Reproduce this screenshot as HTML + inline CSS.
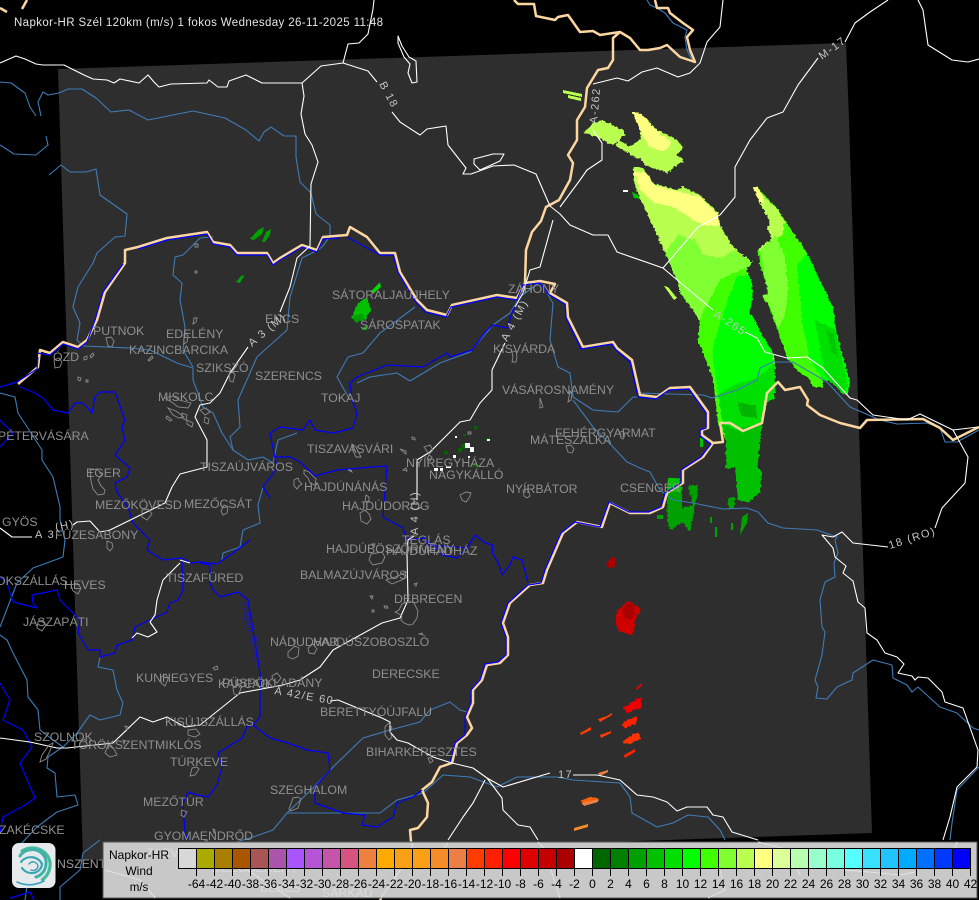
<!DOCTYPE html>
<html><head><meta charset="utf-8"><title>Napkor-HR</title>
<style>
html,body{margin:0;padding:0;background:#000;width:979px;height:900px;overflow:hidden}
svg{display:block;font-family:"Liberation Sans",sans-serif}
.l{fill:#8f8f8f;font-size:12.3px}
.r{fill:#c4c4c4;font-size:11px;letter-spacing:1.4px}
.w{fill:none;stroke:#fff;stroke-width:1.1;stroke-linejoin:round}
.s{fill:none;stroke:#3f7cb8;stroke-width:1.1;stroke-linejoin:round}
.b{fill:none;stroke:#0000ff;stroke-width:1.2;stroke-linejoin:round}
.t{fill:none;stroke:#fcd6a0;stroke-width:2.5;stroke-linejoin:round}
.v{fill:none;stroke:#8c8c8c;stroke-width:.9}
.e polygon,.e rect{shape-rendering:crispEdges}
.k{font-size:12px;fill:#000;text-anchor:middle}
</style></head><body>
<svg width="979" height="900" viewBox="0 0 979 900" xmlns="http://www.w3.org/2000/svg">
<defs><filter id="rough" filterUnits="userSpaceOnUse" x="0" y="0" width="979" height="900"><feTurbulence type="fractalNoise" baseFrequency=".33" numOctaves="2" seed="3" result="n"/><feDisplacementMap in="SourceGraphic" in2="n" scale="4" xChannelSelector="R" yChannelSelector="G"/></filter></defs>
<rect width="979" height="900" fill="#000"/>
<polygon points="58,69 846,43 849,120 872,833 83,860" fill="#2e2e2e"/>

<g class="e" filter="url(#rough)">
<!-- left plume -->
<polygon fill="#b8ff50" points="633,168 643,168 653,183 677,190 683,187 700,195 718,213 720,225 733,247 752,262 747,270 753,293 750,313 773,353 775,363 775,398 767,402 760,423 758,467 762,473 760,493 748,502 738,500 735,467 726,468 726,440 718,423 713,380 708,365 698,340 700,320 680,293 678,283 665,253 657,235 647,213 642,203 635,187"/>
<polygon fill="#ffff80" points="634,172 645,172 655,185 680,192 700,197 718,215 720,225 706,226 690,218 672,206 655,203 640,190"/>
<polygon fill="#80ff30" points="665,253 678,235 695,240 703,255 720,258 735,250 752,262 747,270 753,293 750,313 773,353 775,398 767,402 760,423 726,440 718,423 713,380 708,365 698,340 700,320 680,293 678,283"/>
<polygon fill="#40ff00" points="700,318 720,280 745,268 753,293 750,313 773,353 775,398 767,402 760,423 726,440 718,423 713,380 708,365 698,340"/>
<polygon fill="#00ff00" points="712,350 723,313 737,277 750,275 753,293 750,313 773,353 775,398 767,402 762,423 726,430 718,395"/>
<polygon fill="#00e000" points="718,395 733,385 757,378 775,363 775,398 767,402 760,423 758,467 735,467 726,468 726,440"/>
<polygon fill="#00c000" points="721,423 735,430 762,423 758,467 762,473 760,493 748,502 738,500 735,467 726,468 726,440"/>
<polygon fill="#00b400" points="737,402 756,405 757,418 742,416"/>
<!-- right plume -->
<polygon fill="#40ff00" points="753,187 757,186 764,195 777,208 790,228 807,253 820,280 833,307 837,333 850,383 848,395 842,393 832,382 823,380 822,387 813,387 810,380 797,370 787,358 777,327 768,305 762,296 768,293 765,280 760,265 758,250 765,243 772,240 768,228 770,222 762,205 756,195"/>
<polygon fill="#b8ff50" points="756,195 764,197 777,208 785,222 782,235 770,245 760,250 758,250 765,243 772,240 768,228 770,222"/>
<polygon fill="#ffff80" points="753,187 757,186 764,197 762,205 756,195"/>
<polygon fill="#80ff30" points="760,250 775,235 785,255 788,290 784,318 778,328 769,304 762,296 768,293"/>
<polygon fill="#00ff00" points="797,265 807,253 820,280 833,307 837,333 850,383 848,395 842,393 832,382 823,380 810,360 802,320"/>
<polygon fill="#00e000" points="815,320 836,330 848,385 842,393 825,375"/>
<polygon fill="#00c800" points="826,330 833,333 838,358 832,352"/>
<!-- top echoes -->
<polygon fill="#b8ff50" points="583,133 593,123 603,120 623,130 625,135 613,145 597,137"/>
<polygon fill="#b8ff50" points="618,140 640,152 645,160 637,158 616,146"/>
<polygon fill="#b8ff50" points="632,112 643,115 657,130 677,140 683,148 677,155 684,160 667,173 645,165 640,158 628,148 640,140 640,128"/>
<polygon fill="#ffff80" points="632,112 643,115 658,132 672,142 664,152 648,146 642,134"/>
<!-- Csenger area -->
<polygon fill="#00c000" points="668,478 680,478 682,492 682,500 667,497"/>
<polygon fill="#00a000" points="667,492 682,492 682,508 693,505 688,485 698,485 698,492 690,532 683,522 670,530 667,517"/>
<polygon fill="#00a000" points="728,497 735,497 734,509 728,509"/>
<polygon fill="#00c000" points="352,317 358,303 366,298 372,310 365,320 355,322"/>
<polygon fill="#00a000" points="352,317 362,313 366,320 355,322"/>
<!-- red -->
<polygon fill="#d00000" points="615,623 618,610 628,601 633,603 641,610 635,620 635,630 630,635 618,630"/>
<polygon fill="#aa0000" points="623,608 629,602 634,604 635,615 630,620 623,617"/>
<polygon fill="#ee0000" points="623,708 635,700 642,697 641,708 627,713"/>
<polygon fill="#ff2000" points="621,725 630,718 637,717 637,723 625,728"/>
<polygon fill="#ff3000" points="622,742 632,735 639,733 640,739 630,744"/>
</g>
<g class="e">
<polygon fill="#b8ff50" points="563,90 582,94 582,97 563,93"/>
<polygon fill="#b8ff50" points="568,95 581,98 581,101 568,98"/>
<polygon fill="#b8ff50" points="664,286 668,287 677,298 674,300"/>
<rect x="623" y="190" width="5" height="2" fill="#fff"/>
<polygon fill="#00c000" points="632,192 638,195 640,199 634,198"/>
<polygon fill="#00a000" points="742,517 748,513 747,523 740,535"/>
<rect x="657" y="515" width="6" height="4" fill="#00a000"/>
<rect x="710" y="517" width="2" height="6" fill="#00a000"/><rect x="715" y="527" width="2" height="10" fill="#00a000"/><rect x="731" y="523" width="2" height="7" fill="#00a000"/>
<rect x="700" y="438" width="3" height="9" fill="#00c000"/>
<polygon fill="#00a000" points="250,239 258,230 264,227 262,234 254,240"/>
<polygon fill="#00a000" points="262,242 266,232 271,229 270,235 265,242"/>
<polygon fill="#00a000" points="236,282 242,275 244,276 240,283"/>
<polygon fill="#00d800" points="370,292 380,282 381,287 374,293"/>
<polygon fill="#00a000" points="363,327 368,325 367,330 362,330"/>
<rect x="474" y="426" width="3" height="3" fill="#006600"/><rect x="463" y="434" width="3" height="2" fill="#006600"/><rect x="486" y="438" width="4" height="3" fill="#006600"/>
<rect x="487" y="439" width="3" height="2" fill="#fff"/><rect x="461" y="444" width="5" height="5" fill="#006600"/><rect x="465" y="443" width="5" height="5" fill="#fff"/><rect x="470" y="447" width="4" height="5" fill="#fff"/><rect x="458" y="448" width="4" height="4" fill="#006600"/><rect x="444" y="451" width="4" height="3" fill="#006600"/><rect x="453" y="455" width="3" height="3" fill="#fff"/><rect x="473" y="463" width="4" height="4" fill="#006600"/><rect x="446" y="466" width="5" height="2" fill="#fff"/><rect x="440" y="468" width="3" height="3" fill="#fff"/><rect x="434" y="468" width="4" height="3" fill="#fff"/><rect x="455" y="436" width="2" height="2" fill="#fff"/><rect x="468" y="456" width="2" height="2" fill="#fff"/>
<polygon fill="#aa0000" points="606,563 612,557 615,558 615,567 608,568"/>
<polygon fill="#e00000" points="636,688 642,683 642,685 637,690"/>
<polygon fill="#ff3c00" points="598,719 607,716 612,713 612,715 600,722"/>
<polygon fill="#ff3c00" points="580,733 591,727 591,730 581,735"/>
<polygon fill="#ff3c00" points="600,735 611,731 611,733 601,738"/>
<polygon fill="#ff2000" points="624,755 635,749 635,752 625,758"/>
<polygon fill="#ec7f45" points="598,773 608,770 608,772 600,776"/>
<polygon fill="#ff6000" points="580,801 590,797 598,798 597,801 586,804"/>
<polygon fill="#ec7f45" points="581,803 599,799 598,802 584,806"/>
<polygon fill="#f58c2a" points="574,828 588,824 588,827 574,831"/>
</g>

<!-- rivers -->
<g class="s">
<polyline points="0,82 11,83 25,93 30,107 36,116"/>
<polyline points="41,116 38,102 43,92 48,95 59,93 68,89 82,89 96,98 111,112 129,110 148,120 168,116 193,111 225,118 246,130 259,141 264,132 271,127 284,136 296,136 296,157 300,182 311,193 316,214 330,225 330,236 323,246 318,250 302,258 290,297 287,330 257,357 238,400 240,427 230,437 233,450 248,460 263,457 273,463 278,440 297,433"/>
<polyline points="0,145 14,154 36,155 48,145 46,136"/>
<polyline points="49,175 61,165 70,172 86,172 96,169 100,195 127,214 125,236 115,237 97,253 93,263 78,287 73,307 80,323 77,340 83,346 130,348 150,350 177,363 193,368 193,380 203,407 213,413 222,433 233,450"/>
<polyline points="213,237 200,238 183,255 175,257 173,275 182,283 180,300 185,327 183,350 193,367"/>
<polyline points="0,393 15,397 18,413 42,450 42,460 53,477 60,507 60,520 65,540 63,557 33,568 17,583 0,627"/>
<polyline points="0,635 7,640 13,653 27,680 28,697 38,710 40,730 53,740 63,747"/>
<polyline points="100,657 98,667 113,670 117,690 123,703 120,715 100,720 90,715 77,733 63,747 48,757 47,768 55,773 57,797 75,795 78,805 57,812 37,827 20,845 30,865 25,900"/>
<polyline points="100,840 83,853 80,870 60,887 60,900"/>
<polyline points="263,487 258,505 260,523 243,530 240,547 223,553 222,560"/>
<polyline points="415,307 380,333 363,353 348,357 337,377 350,400"/>
<polyline points="357,383 370,377 397,373 410,381 440,363 470,352 493,325 510,313 520,297 540,282 553,303 550,340 558,367 570,373 573,397 593,410 618,412 633,397 640,397"/>
<polyline points="573,400 593,427 613,447 627,462 640,468 650,472 660,490 673,500 693,503 723,509 747,508 758,512 768,523 783,528 817,530 837,537 835,540 838,553 834,563 835,577 825,582 820,600 822,627 825,632 822,655 815,680 818,687 816,698 827,699 837,687 852,680 853,673 873,660 892,665 893,678 907,685 912,692 918,687 940,707 957,713 973,728 979,730"/>
<polyline points="640,393 703,395 712,398 737,390 757,380 760,368 773,362 793,362 827,382 850,407 880,420 897,424 927,423 940,428 945,442 957,442 979,430"/>
<polyline points="979,767 957,790 952,823 950,840"/>
<polyline points="233,843 253,837 273,830 287,813 343,813 380,813 397,800 423,793 443,775 470,777 497,787 517,777 557,777 573,780 620,783 630,797 632,813 657,827 673,823 688,815 708,817 720,830 725,840"/>
<polyline points="467,712 460,710 450,702 430,710 420,722 390,730 363,738 333,767 313,788 287,813"/>
<polyline points="647,0 650,5 657,8 665,13 673,23 687,30 685,37 687,50 693,62"/>
</g>

<!-- tan border -->
<g class="t">
<polyline points="18,384 38,367 40,350 50,353 63,342 78,347 87,340 97,320 105,292 125,263 125,250 138,247 167,238 207,232 213,242 230,245 237,253 267,253 273,263 280,258 302,245 317,250 323,237 347,235 350,227 367,237 380,253 395,253 400,272 417,300 427,310 447,315 452,305 497,295 517,298 525,283 526,250 532,232 541,221 546,207 559,200 570,180 573,163 568,155 577,140 577,120 585,107 587,88 598,70 608,68 613,60 613,38 620,32"/>
<polyline points="514,0 518,4 534,4 536,16 555,20 558,17 568,15 580,32 593,31 600,35 613,33 620,32 630,38 640,50 648,50 660,48 667,45 680,57 695,62 690,50 687,37 693,30 683,23 670,13 668,8 657,8 655,0"/>
<polyline points="525,283 540,281 555,284 550,293 567,303 568,317 583,347 613,342 617,348 632,360 640,395 657,397 670,388 690,387 708,412 708,428 702,430 702,435 713,443 723,442 720,423 730,423 743,431 762,423 767,393 778,382 785,390 800,387 808,400 807,405 820,415 840,423 860,428 867,420 923,419 940,428 953,440 979,427"/>
<polyline points="713,443 703,457 683,470 683,483 667,493 663,507 650,513 630,513 610,503 602,527 577,522 563,533 547,570 543,583 530,585 510,603 503,623 508,637 508,655 500,663 487,665 482,680 473,690 473,703 467,717 472,728 467,735 457,743 452,763 440,767 432,782 422,790 428,803 427,817 418,828 410,830 412,853 383,895 380,900"/>
<polyline points="0,8 7,12"/><polyline points="27,0 22,9"/>
</g>

<!-- county blue -->
<g class="b">
<polyline points="0,387 17,382 37,369 38,357"/>
<polyline points="37,353 50,355 63,344 78,349 87,342 95,320 103,292 123,264"/>
<polyline points="138,249 167,240 207,234 213,244 230,247 237,255 267,255 273,265 280,260 302,247 317,252 323,239 340,238"/>
<polyline points="347,237 380,255 393,255 398,272 415,301 425,312 446,317 451,307 497,297 517,300 523,285 540,283 548,294 565,304 566,318 581,349 612,344 616,350 630,362 638,397 656,399 669,390 689,389 706,413 706,428 700,430 700,436 711,444"/>
<polyline points="711,444 701,457 681,470 681,483 665,493 661,507 649,512 629,512 609,502 600,527 575,522 561,533 545,570 541,583 528,585 508,603 501,623 506,637 506,655 498,662 485,664 480,680 471,690 471,703 465,717 465,735 455,743 450,763"/>
<polyline points="20,387 35,393 43,398 53,410 68,413 75,403 83,403 92,413 95,397 100,392 115,392 125,420 122,427 125,440 115,455 130,468 127,477 115,483 117,492 128,507 133,523 150,540 147,550 163,560 182,558 190,563 200,562 217,564 233,553 250,540"/>
<polyline points="270,498 263,487 277,468 270,433 280,427 303,430 310,420 315,430 333,433 353,428 357,413 352,400 350,383 357,377 387,365 423,367 447,353 450,357 472,350 487,330 493,325 507,328 513,310 520,298"/>
<polyline points="275,457 290,457 300,462 315,476 337,470 372,467 387,466 383,517 403,528 407,540 425,538 428,545 467,548 457,558 443,555 427,540"/>
<polyline points="467,548 475,535 485,543 493,545 492,553 498,562 502,575 510,565 513,557 522,560 528,583"/>
<polyline points="200,563 210,565 210,583 213,590 220,597 238,592 248,600 260,673 260,717 253,725 247,727 242,738 218,753 222,767 217,785 208,797 197,795 188,792 183,803 185,833 188,840"/>
<polyline points="253,725 270,738 285,742 307,750 328,753 330,770 315,787 315,803 343,813 365,815 362,825 377,827 393,817 397,803 413,797 422,790"/>
<polyline points="182,560 183,590 178,600 170,603 167,612 135,627 132,640 117,645 115,653 100,657 100,650 88,650 78,633 80,620 60,600 57,590 32,595 33,603 37,608 13,602 7,583 0,577"/>
<polyline points="0,683 10,700 3,720 23,730 32,747 20,763 35,798 25,805 3,817 0,833"/>
<polyline points="0,420 13,433 0,447"/>
<polyline points="10,898 30,892 34,900"/>
</g>

<!-- roads -->
<g class="w">
<polyline points="0,63 16,56 25,59 36,64 43,65 64,65 84,75 93,79 107,80 114,83 120,79 139,83 148,75 154,82 159,87 171,84 207,83 209,80 218,87 227,87 229,81 246,75 262,83 302,83 321,66 343,63 368,71 377,82"/>
<polyline points="392,112 400,122 420,135 427,129 446,126 448,145 466,168 463,174 471,174 493,166 514,165 536,174 550,206 560,214 570,225 593,235 608,235 617,252 663,268 713,310"/>
<polyline points="745,332 757,338 765,352 787,358 807,357 823,368 850,398 857,400 873,415 907,420 920,414 953,430 978,427"/>
<polyline points="953,430 968,457 965,483 942,508 935,528"/>
<polyline points="888,547 853,543 842,532 833,537 822,535 833,548 835,557 846,566 843,573 853,581 858,602 865,608 867,633 877,640 885,653 897,657 904,664 898,673 912,676 915,680 918,677 928,678 942,692 945,702 963,708 978,750 977,767 957,787 950,817 943,840"/>
<polyline points="302,83 304,96 301,114 305,134 312,145 318,162 311,184 310,246 297,258 290,287 280,312"/>
<polyline points="248,347 230,373 220,393 210,403 200,405 195,417 207,440 207,467 180,474 172,487 165,503 110,530 100,532 90,521 77,522 73,525"/>
<polyline points="0,528 12,537 32,537"/>
<polyline points="343,63 348,44 359,43 368,34 373,9 374,0"/>
<polygon points="398,36 402,46 409,57 416,61 417,82 412,83 408,73 410,64 404,57 398,43"/>
<polygon points="474,159 493,154 504,154 500,161 480,170 474,164"/>
<polyline points="553,220 540,267 530,270 523,293 515,307"/>
<polyline points="505,343 492,370 492,390 480,403 470,420 460,422 430,452 417,460 417,500"/>
<polyline points="414,536 408,540 407,553 408,600 400,618 382,623 333,650 320,667 300,680 283,685 240,693 200,725 185,727 167,717 153,722 140,717 113,743 67,748 57,748 30,742 0,738"/>
<polyline points="723,0 720,27 707,42 700,63 690,73 678,77 657,68 642,72 628,81 617,78 593,84"/>
<polyline points="593,130 602,143 602,160 587,170 580,180 560,207"/>
<polyline points="720,215 698,227 663,268"/>
<polyline points="767,118 783,112 798,85 818,58"/>
<polyline points="767,118 750,140 735,167 735,197 720,215"/>
<polyline points="845,42 855,23 870,12 888,0"/>
<polyline points="918,0 923,10 928,45 952,60 968,62 979,59"/>
<polyline points="330,701 338,700 382,718 390,722 390,732 397,740 408,743 433,757 452,763 473,768 487,778 503,787 550,773"/>
<polyline points="573,775 597,775 620,780 637,795 653,797 667,802 677,811 687,807 707,807 713,815 723,817 732,832 758,840"/>
<polyline points="487,778 502,798 503,810 518,825 530,827 538,840"/>
<polyline points="485,780 473,803 463,817 448,840"/>
<polyline points="180,560 190,563"/>
<polyline points="180,563 163,580 157,600 155,615 150,622 157,632 148,637 137,633 132,638"/>
</g>

<!-- town outlines -->
<path class="v" d="M165 398l8-2 6 4 12 3-3 5-10-1-5-4zM168 408l8 3 8 6-5 1-6-3zM182 413l5 2-1 5-4-2zM187 420l6 3-1 4-5-3zM205 417l4 2-1 5-4-2zM167 416l5 4-2 1-4-3zM200 410l6-2 4 4-5 3zM90 470l7-1 5 5-4 6 3 6 4 4-1 4-6 1-5-6-2-8zM142 510l6-1 4 5-5 6-5-3zM224 505l4 2-1 6-4 2-2-4zM106 338l5-1 3 4-2 6-4-1zM54 360l5-2 3 4-2 5-5 1zM90 356l3-3 1 2-3 3zM148 360l4-4 1 2-4 3zM78 377l3 1-1 3-2-1zM195 244l3 0 0 3-3 0zM195 271l2 0 0 2-2 0zM194 318l3 0-1 4-3 2zM184 335l2-2 2 3-1 6-3 2zM229 374l4-2 2 3-2 7-3-1zM294 480l4-2 1 3 3 3-3 2-2 3-3-3zM84 357l3-1 0 3-3 1zM86 380l2 0 0 2-2 0zM107 541l5 2 1 4-3 4-3-3zM71 585l6-2 4 5-3 6-5-3zM38 622l5-2 3 5-4 6-5-3zM360 513l5-3 4 4 2 5-4 5-6-3zM304 470l5 2 7 7-1 6-5-2-2-5-4-4zM371 554l11-2 3 5-3 6-9 2-4-5zM386 580l12-4 8-4-2 7-12 5zM414 584l3-1-1 3zM370 596l3 0-1 3zM384 606l3 0 1 2-3 0zM372 610l2 0 0 2-2 0zM395 612l4-2 3-6 7-3 5 2 4 8-1 7-4 6-4 1-5-2-3-3 1-4-3-2zM419 634l3-1 1 2zM293 640l2 0 0 3zM288 652l7-6 4 2-1 8-5 3-5-2zM308 648l5-4 4 5-3 5-5-1zM272 676l5-3 4 5-4 5-4-3zM161 677l5-3 2 5-3 7-4-3zM213 668l4-2 1 3-3 1zM233 688l5-3 3 4-3 6-4-1zM188 730l8-1 4 5-5 3-7-2zM192 768l5-1 2 2-4 6-5 1zM293 798l5-1 3 2-3 9-7 3-2-2zM49 745l4-2-3 8-4 8-6 3 2-7zM108 745l6 4 3 6-7 2-5-4zM125 726l3 1-1 3zM123 740l2 1-1 3zM182 810l5 2-3 5-3-2zM205 840l2 0 1 3-3 1zM213 829l2 1-1 3zM385 727l4-4 3 5-2 4 2 5-3 3-4-5zM428 758l3 0 2 3-3 2zM460 495l6-3 5 1-2 5-3 4-4-2zM523 490l4-1 2 3 1 4-3 2-3-2zM566 446l5-1 3 4-2 4-4-1zM540 398l1 3 2 6-3 1zM570 391l2 3-1 6-3 2zM512 352l4-1 1 6-1 5-4 0 1-5zM620 432l3-1 2 4-2 4-2-1zM468 432l3 0 0 2-3 0zM412 437l3 1 0 2-3-1zM424 447l6-2 3 5-4 4zM429 455l3 2-2 4-3-2zM400 449l6 2 0 3zM403 470l3-2 1 3zM352 444l4 3 3 6 2 4-5 0-3-6zM366 495l3 2 0 4-4 1zM348 470l3 0 1 2zM372 544l3 0-1 3z"/>

<!-- place names -->
<g class="l">
<text x="93" y="335">PUTNOK</text><text x="166" y="338">EDELÉNY</text><text x="129" y="354">KAZINCBARCIKA</text><text x="196" y="372">SZIKSZÓ</text><text x="265" y="323">ENCS</text><text x="255" y="380">SZERENCS</text><text x="321" y="402">TOKAJ</text><text x="158" y="401">MISKOLC</text><text x="53" y="361">ÓZD</text><text x="-2" y="440">PÉTERVÁSÁRA</text><text x="86" y="477">EGER</text><text x="95" y="509">MEZŐKÖVESD</text><text x="184" y="508">MEZŐCSÁT</text><text x="200" y="471">TISZAÚJVÁROS</text><text x="2" y="526">GYÖS</text><text x="55" y="539">FÜZESABONY</text>
<text x="307" y="453">TISZAVASVÁRI</text><text x="304" y="491">HAJDÚNÁNÁS</text><text x="342" y="510">HAJDÚDOROG</text><text x="402" y="544">TÉGLÁS</text><text x="326" y="553">HAJDÚBÖSZÖRMÉNY</text><text x="386" y="555">HAJDÚHADHÁZ</text><text x="332" y="299">SÁTORALJAÚJHELY</text><text x="360" y="329">SÁROSPATAK</text><text x="508" y="293">ZÁHONY</text><text x="493" y="353">KISVÁRDA</text><text x="502" y="394">VÁSÁROSNAMÉNY</text><text x="555" y="437">FEHÉRGYARMAT</text><text x="530" y="444">MÁTÉSZALKA</text><text x="406" y="467">NYÍREGYHÁZA</text><text x="429" y="479">NAGYKÁLLÓ</text><text x="506" y="493">NYÍRBÁTOR</text><text x="620" y="492">CSENGER</text>
<text x="-4" y="585">OKSZÁLLÁS</text><text x="64" y="589">HEVES</text><text x="166" y="582">TISZAFÜRED</text><text x="23" y="626">JÁSZAPÁTI</text><text x="270" y="646">NÁDUDVAR</text><text x="313" y="646">HAJDÚSZOBOSZLÓ</text><text x="136" y="682">KUNHEGYES</text><text x="218" y="688">KARCAG</text><text x="222" y="687">PÜSPÖKLADÁNY</text><text x="165" y="726">KISÚJSZÁLLÁS</text><text x="34" y="741">SZOLNOK</text><text x="71" y="749">TÖRÖKSZENTMIKLÓS</text><text x="170" y="766">TÚRKEVE</text><text x="143" y="806">MEZŐTÚR</text><text x="270" y="794">SZEGHALOM</text><text x="154" y="840">GYOMAENDRŐD</text><text x="-1" y="834">ZAKÉCSKE</text><text x="300" y="579">BALMAZÚJVÁROS</text><text x="394" y="603">DEBRECEN</text><text x="372" y="678">DERECSKE</text><text x="320" y="716">BERETTYÓÚJFALU</text><text x="366" y="756">BIHARKERESZTES</text>
</g>

<!-- road labels -->
<g class="r">
<text transform="translate(379,84) rotate(62)">B 18</text>
<text transform="translate(252,347) rotate(-40)">A 3 (M)</text>
<text transform="translate(507,342) rotate(-62)">A 4 (M)</text>
<text transform="translate(418,535) rotate(-90)">A 4 (H)</text>
<text transform="translate(597,124) rotate(-85)">A-262</text>
<text transform="translate(713,316) rotate(33)">A-265</text>
<text transform="translate(822,60) rotate(-36)">M-17</text>
<text transform="translate(890,549) rotate(-18)">18 (RO)</text>
<text x="558" y="778">17</text>
<text x="35" y="538">A 3</text>
<text transform="translate(56,531) rotate(-12)">(H)</text>
<text transform="translate(274,694) rotate(10)">A 42/E 60</text>
<text transform="translate(241,603) rotate(77)" style="fill:#1a1ab0;letter-spacing:.4px">Hajdú-Bihar</text>
</g>

<text x="14" y="26" textLength="369" style="font-size:11.5px;fill:#e4e4e4">Napkor-HR Szél 120km (m/s) 1 fokos Wednesday 26-11-2025 11:48</text>

<!-- legend box -->
<text x="57" y="868" style="font-size:12.3px;fill:#9a9a9a">NSZENTMÁRTON</text>
<rect x="103" y="842" width="874" height="56" fill="#c8c8c8" stroke="#555" stroke-width="1"/>
<g style="font-size:12.3px;fill:#dcdcdc">
<text x="146" y="857">ZARVAS</text><text x="212" y="872">MEZŐBERÉNY</text><text x="260" y="892">BÉKÉS</text><text x="322" y="897">SARKAD</text>
</g>
<g fill="none" stroke="#e2e2e2" stroke-width="1">
<polyline points="412,843 412,853 383,895 381,898"/>
<polyline points="538,842 544,848 560,898"/>
<polyline points="448,843 430,868"/>
<polyline points="758,842 790,850 800,875"/>
<polyline points="845,870 880,873 900,875 915,872"/>
<polyline points="230,860 255,875 290,898"/>
<polyline points="105,870 140,880 155,898"/>
<polyline points="720,870 725,890 708,898"/>
<polyline points="957,842 950,868"/>
</g>

<g class="e" stroke="#000" stroke-width="1">
<rect x="178.5" y="848.5" width="18" height="20" fill="#d8d8d8"/>
<rect x="196.5" y="848.5" width="18" height="20" fill="#aaaa00"/>
<rect x="214.5" y="848.5" width="18" height="20" fill="#aa7f00"/>
<rect x="232.5" y="848.5" width="18" height="20" fill="#aa5500"/>
<rect x="250.5" y="848.5" width="18" height="20" fill="#aa5555"/>
<rect x="268.5" y="848.5" width="18" height="20" fill="#aa55aa"/>
<rect x="286.5" y="848.5" width="18" height="20" fill="#aa55ff"/>
<rect x="304.5" y="848.5" width="18" height="20" fill="#b555d5"/>
<rect x="322.5" y="848.5" width="18" height="20" fill="#c455aa"/>
<rect x="340.5" y="848.5" width="18" height="20" fill="#d55580"/>
<rect x="358.5" y="848.5" width="18" height="20" fill="#ee8040"/>
<rect x="376.5" y="848.5" width="18" height="20" fill="#ffaa00"/>
<rect x="394.5" y="848.5" width="18" height="20" fill="#f9a016"/>
<rect x="412.5" y="848.5" width="18" height="20" fill="#f9a016"/>
<rect x="430.5" y="848.5" width="18" height="20" fill="#f58c2a"/>
<rect x="448.5" y="848.5" width="18" height="20" fill="#ec7f45"/>
<rect x="466.5" y="848.5" width="18" height="20" fill="#ff3c00"/>
<rect x="484.5" y="848.5" width="18" height="20" fill="#ff2000"/>
<rect x="502.5" y="848.5" width="18" height="20" fill="#ff0000"/>
<rect x="520.5" y="848.5" width="18" height="20" fill="#e00000"/>
<rect x="538.5" y="848.5" width="18" height="20" fill="#c40000"/>
<rect x="556.5" y="848.5" width="18" height="20" fill="#aa0000"/>
<rect x="574.5" y="848.5" width="18" height="20" fill="#ffffff"/>
<rect x="592.5" y="848.5" width="18" height="20" fill="#006600"/>
<rect x="610.5" y="848.5" width="18" height="20" fill="#008000"/>
<rect x="628.5" y="848.5" width="18" height="20" fill="#00a000"/>
<rect x="646.5" y="848.5" width="18" height="20" fill="#00c000"/>
<rect x="664.5" y="848.5" width="18" height="20" fill="#00e000"/>
<rect x="682.5" y="848.5" width="18" height="20" fill="#00ff00"/>
<rect x="700.5" y="848.5" width="18" height="20" fill="#40ff00"/>
<rect x="718.5" y="848.5" width="18" height="20" fill="#80ff30"/>
<rect x="736.5" y="848.5" width="18" height="20" fill="#b8ff50"/>
<rect x="754.5" y="848.5" width="18" height="20" fill="#ffff80"/>
<rect x="772.5" y="848.5" width="18" height="20" fill="#dcff9a"/>
<rect x="790.5" y="848.5" width="18" height="20" fill="#b8ffb0"/>
<rect x="808.5" y="848.5" width="18" height="20" fill="#99ffcc"/>
<rect x="826.5" y="848.5" width="18" height="20" fill="#77ffe0"/>
<rect x="844.5" y="848.5" width="18" height="20" fill="#55ffff"/>
<rect x="862.5" y="848.5" width="18" height="20" fill="#39e0ff"/>
<rect x="880.5" y="848.5" width="18" height="20" fill="#20c4ff"/>
<rect x="898.5" y="848.5" width="18" height="20" fill="#00aaff"/>
<rect x="916.5" y="848.5" width="18" height="20" fill="#0070ff"/>
<rect x="934.5" y="848.5" width="18" height="20" fill="#0038ff"/>
<rect x="952.5" y="848.5" width="18" height="20" fill="#0000ff"/>
</g>
<path stroke="#000" stroke-width="1" shape-rendering="crispEdges" d="M196.5 868v8M214.5 868v8M232.5 868v8M250.5 868v8M268.5 868v8M286.5 868v8M304.5 868v8M322.5 868v8M340.5 868v8M358.5 868v8M376.5 868v8M394.5 868v8M412.5 868v8M430.5 868v8M448.5 868v8M466.5 868v8M484.5 868v8M502.5 868v8M520.5 868v8M538.5 868v8M556.5 868v8M574.5 868v8M592.5 868v8M610.5 868v8M628.5 868v8M646.5 868v8M664.5 868v8M682.5 868v8M700.5 868v8M718.5 868v8M736.5 868v8M754.5 868v8M772.5 868v8M790.5 868v8M808.5 868v8M826.5 868v8M844.5 868v8M862.5 868v8M880.5 868v8M898.5 868v8M916.5 868v8M934.5 868v8M952.5 868v8M970.5 868v8"/>
<g class="k">
<text x="139" y="859">Napkor-HR</text><text x="139" y="875">Wind</text><text x="139" y="891" style="font-size:11.5px">m/s</text>
<text x="196.5" y="888">-64</text><text x="214.5" y="888">-42</text><text x="232.5" y="888">-40</text><text x="250.5" y="888">-38</text><text x="268.5" y="888">-36</text><text x="286.5" y="888">-34</text><text x="304.5" y="888">-32</text><text x="322.5" y="888">-30</text><text x="340.5" y="888">-28</text><text x="358.5" y="888">-26</text><text x="376.5" y="888">-24</text><text x="394.5" y="888">-22</text><text x="412.5" y="888">-20</text><text x="430.5" y="888">-18</text><text x="448.5" y="888">-16</text><text x="466.5" y="888">-14</text><text x="484.5" y="888">-12</text><text x="502.5" y="888">-10</text><text x="520.5" y="888">-8</text><text x="538.5" y="888">-6</text><text x="556.5" y="888">-4</text><text x="574.5" y="888">-2</text><text x="592.5" y="888">0</text><text x="610.5" y="888">2</text><text x="628.5" y="888">4</text><text x="646.5" y="888">6</text><text x="664.5" y="888">8</text><text x="682.5" y="888">10</text><text x="700.5" y="888">12</text><text x="718.5" y="888">14</text><text x="736.5" y="888">16</text><text x="754.5" y="888">18</text><text x="772.5" y="888">20</text><text x="790.5" y="888">22</text><text x="808.5" y="888">24</text><text x="826.5" y="888">26</text><text x="844.5" y="888">28</text><text x="862.5" y="888">30</text><text x="880.5" y="888">32</text><text x="898.5" y="888">34</text><text x="916.5" y="888">36</text><text x="934.5" y="888">38</text><text x="952.5" y="888">40</text><text x="970.5" y="888">42</text>
</g>

<!-- logo -->
<rect x="12" y="843" width="43.5" height="45" rx="7" fill="#e6eaec"/>
<g fill="none" stroke-linecap="round">
<path d="M22 851A18 17 0 0 1 50 862A18 19 0 0 1 42 880" stroke="#45bb9c" stroke-width="3.2" stroke-dasharray="2.2 .6"/>
<path d="M20 856A14 13 0 0 1 46 864A14 14 0 0 1 36 877" stroke="#40b0a8" stroke-width="3" stroke-dasharray="2.2 .6"/>
<path d="M21 862A12 11 0 0 1 42 864A10 10 0 0 1 33 873A12 12 0 0 1 22 868" stroke="#3aa6b4" stroke-width="2.2"/>
<path d="M29 864A5 5 0 0 1 38 866A5 5 0 0 1 31 870" stroke="#3a9fb0" stroke-width="1.4"/>
<path d="M17 882Q30 888 44 881" stroke="#3aa0c0" stroke-width="1.600"/>
</g>
</svg>
</body></html>
